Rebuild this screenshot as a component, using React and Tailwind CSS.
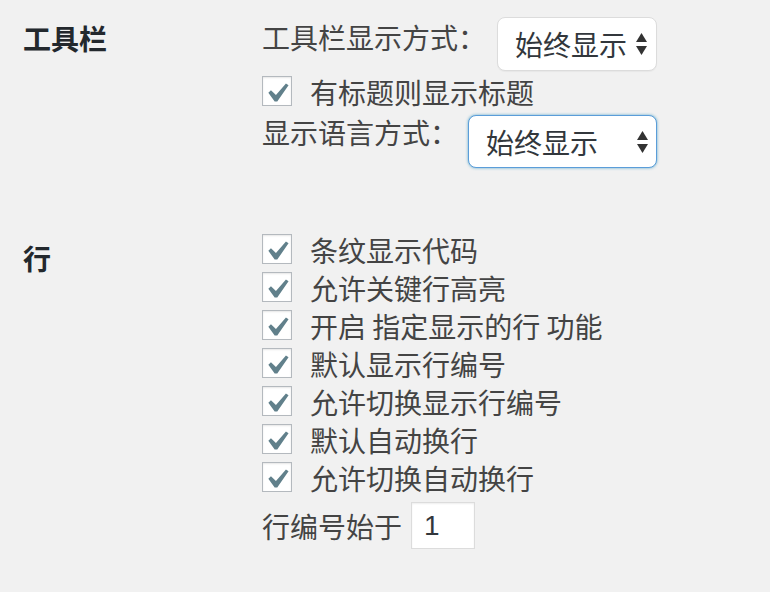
import React from "react";

const Check = () => (
  <div className="w-[30px] h-[30px] shrink-0 border border-[#b4b9be] bg-white shadow-[inset_0_1px_2px_rgba(0,0,0,0.1)] flex items-center justify-center mb-[3px]">
    <svg width="21" height="19" viewBox="5.6 4.7 10.8 9.7" className="ml-[2px] mt-[3px]">
      <path d="M14.83 4.89l1.34.94-5.81 8.38H9.02L5.78 9.67l1.34-1.25 2.57 2.4z" fill="#61808b" />
    </svg>
  </div>
);

const Arrows = () => (
  <svg width="11" height="22" viewBox="0 0 11 22">
    <path d="M5.5 0 L11 9 L0 9 Z" fill="#333" />
    <path d="M0 13 L11 13 L5.5 22 Z" fill="#333" />
  </svg>
);

const CheckRow = ({ children }) => (
  <div className="flex items-center h-[38px]">
    <Check />
    <span className="ml-[18px] leading-[36px] whitespace-nowrap">{children}</span>
  </div>
);

export default function App() {
  return (
    <div className="w-[770px] h-[592px] overflow-hidden bg-[#f1f1f1] text-[#444] text-[28px] font-['Noto_Sans_CJK_SC','Noto_Sans',sans-serif]">
      <div className="flex pt-[17px]">
        <div className="w-[262px] shrink-0 pl-[23px] pt-[3px] leading-[36px] font-semibold text-[#23282d]">
          工具栏
        </div>
        <div className="flex flex-col">
          <div className="flex items-center h-[54px]">
            <span className="leading-[36px] mb-[14px] whitespace-nowrap">工具栏显示方式：</span>
            <div className="ml-[11px] w-[160px] h-[54px] rounded-[8px] border border-[#dcdcdc] bg-white shadow-[0_1px_1px_rgba(0,0,0,0.04)] flex items-center pl-[17px] pr-[9px] justify-between">
              <span className="leading-[36px] text-[#32373c]">始终显示</span>
              <Arrows />
            </div>
          </div>
          <div className="mt-[2px]">
            <CheckRow>有标题则显示标题</CheckRow>
          </div>
          <div className="flex items-center h-[53px] mt-[4px]">
            <span className="leading-[36px] mb-[20px] whitespace-nowrap">显示语言方式：</span>
            <div className="ml-[10px] w-[189px] h-[53px] rounded-[8px] border border-[#5b9dd9] bg-white shadow-[0_0_3px_rgba(30,140,190,0.7)] flex items-center pl-[17px] pr-[8px] justify-between">
              <span className="leading-[36px] text-[#32373c]">始终显示</span>
              <Arrows />
            </div>
          </div>
        </div>
      </div>

      <div className="flex mt-[63px]">
        <div className="w-[262px] shrink-0 pl-[23px] pt-[9px] leading-[36px] font-semibold text-[#23282d]">
          行
        </div>
        <div className="flex flex-col">
          <CheckRow>条纹显示代码</CheckRow>
          <CheckRow>允许关键行高亮</CheckRow>
          <CheckRow>开启 指定显示的行 功能</CheckRow>
          <CheckRow>默认显示行编号</CheckRow>
          <CheckRow>允许切换显示行编号</CheckRow>
          <CheckRow>默认自动换行</CheckRow>
          <CheckRow>允许切换自动换行</CheckRow>
          <div className="flex items-center h-[47px] mt-[5px]">
            <span className="leading-[36px] whitespace-nowrap">行编号始于</span>
            <div className="ml-[9px] w-[64px] h-[47px] border border-[#dcdcdc] bg-white shadow-[inset_0_1px_2px_rgba(0,0,0,0.07)] flex items-center pl-[12px] text-[#32373c]">
              <span className="leading-[36px] font-['Liberation_Sans',sans-serif]">1</span>
            </div>
          </div>
        </div>
      </div>
    </div>
  );
}
